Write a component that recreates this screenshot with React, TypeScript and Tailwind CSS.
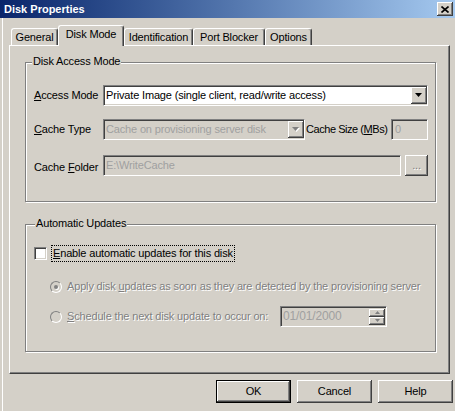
import React from "react";

const raised =
  "bg-[#d4d0c8] shadow-[inset_-1px_-1px_0_#404040,inset_1px_1px_0_#ffffff,inset_-2px_-2px_0_#808080]";
const sunken =
  "border border-t-[#808080] border-l-[#808080] border-b-white border-r-white shadow-[inset_1px_1px_0_#404040,inset_-1px_-1px_0_#d4d0c8]";
const etched = "border border-[#808080] shadow-[inset_1px_1px_0_#ffffff,1px_1px_0_#ffffff]";
const dim = "text-[#808080] [text-shadow:1px_1px_0_#ffffff]";

const Arrow = ({ off = false }: { off?: boolean }) => (
  <svg width="8" height="5" viewBox="0 0 8 5">
    {off && <path d="M1 1h7L4.5 5z" fill="#ffffff" />}
    <path d="M0 0h7L3.5 4z" fill={off ? "#808080" : "#000000"} />
  </svg>
);

const Tab = ({ label, w, active = false }: { label: string; w: string; active?: boolean }) => (
  <div
    className={`${w} flex items-center justify-center border-l border-t border-r border-white border-r-[#404040] rounded-t-[3px] shadow-[inset_-1px_0_0_#808080] bg-[#d4d0c8] ${
      active ? "h-[21px] relative z-10 pb-[3px]" : "h-[18px]"
    }`}
  >
    {label}
  </div>
);

const Radio = ({ checked = false }: { checked?: boolean }) => (
  <div className="w-[12px] h-[12px] rounded-full border border-t-[#808080] border-l-[#808080] border-b-white border-r-white bg-[#d4d0c8] flex items-center justify-center shrink-0">
    {checked && <div className="w-[4px] h-[4px] rounded-full bg-[#808080] shadow-[1px_1px_0_#ffffff]" />}
  </div>
);

export default function App() {
  return (
    <div className="w-[455px] h-[411px] bg-[#d4d0c8] overflow-hidden font-['Liberation_Sans',Arial,sans-serif] text-[11px] leading-[13px] tracking-[-0.16px] text-black">
      {/* title bar */}
      <div className="h-[18px] flex items-center bg-linear-to-r from-[#0a246a] to-[#a6caf0] pl-[4px]">
        <span className="text-white font-bold text-[11px] tracking-normal">Disk Properties</span>
        <div className={`${raised} ml-auto mr-[2px] w-[16px] h-[14px] flex items-center justify-center`}>
          <svg width="8" height="7" viewBox="0 0 8 7">
            <path d="M0.5 0.5L7.5 6.5M7.5 0.5L0.5 6.5" stroke="#000" strokeWidth="1.6" />
          </svg>
        </div>
      </div>

      <div className="pl-[2px]">
        <div className="border-l border-white pl-[6px] h-[393px] flex flex-col">
          {/* tabs */}
          <div className="mt-[8px] ml-[2px] h-[20px] flex items-end">
            <Tab label="General" w="w-[47px]" />
            <Tab label="Disk Mode" w="w-[66px]" active />
            <Tab label="Identification" w="w-[69px]" />
            <Tab label="Port Blocker" w="w-[72px]" />
            <Tab label="Options" w="w-[47px]" />
          </div>

          {/* panel */}
          <div className="-mt-px w-[441px] h-[329px] border border-white border-r-[#404040] border-b-[#404040] shadow-[inset_-1px_-1px_0_#808080] flex flex-col">
            {/* Disk Access Mode */}
            <div className={`${etched} relative ml-[15px] mt-[16px] w-[411px] h-[140px] flex flex-col`}>
              <span className="absolute -top-[8px] left-[6px] px-[1px] bg-[#d4d0c8]">Disk Access Mode</span>

              <div className="mt-[22px] flex items-center h-[21px]">
                <div className="w-[77px] pl-[8px]">
                  <u>A</u>ccess Mode
                </div>
                <div className={`${sunken} w-[325px] h-[21px] bg-white flex items-center`}>
                  <span className="pl-[2px] flex-1">Private Image (single client, read/write access)</span>
                  <div className={`${raised} w-[16px] h-[17px] flex items-center justify-center`}>
                    <Arrow />
                  </div>
                </div>
              </div>

              <div className="mt-[13px] flex items-center h-[21px]">
                <div className="w-[77px] pl-[8px]">
                  <u>C</u>ache Type
                </div>
                <div className={`${sunken} w-[202px] h-[21px] bg-[#d4d0c8] flex items-center`}>
                  <span className="pl-[2px] flex-1 text-[#a0a0a0]">Cache on provisioning server disk</span>
                  <div className={`${raised} w-[16px] h-[17px] flex items-center justify-center`}>
                    <Arrow off />
                  </div>
                </div>
                <div className="w-[86px] pl-[1px] whitespace-nowrap overflow-hidden tracking-[-0.45px]">
                  Cache Size (<u>M</u>Bs)
                </div>
                <div className={`${sunken} w-[37px] h-[21px] bg-[#d4d0c8] flex items-center pl-[3px] text-[#a0a0a0]`}>0</div>
              </div>

              <div className="mt-[15px] flex items-center h-[21px]">
                <div className="w-[77px] pl-[8px] pt-[4px]">
                  Cache <u>F</u>older
                </div>
                <div className={`${sunken} w-[298px] h-[21px] bg-[#d4d0c8] flex items-center pl-[2px] text-[#a0a0a0]`}>
                  E:\WriteCache
                </div>
                <div className={`${raised} ml-[4px] w-[23px] h-[21px] flex items-center justify-center ${dim}`}>...</div>
              </div>
            </div>

            {/* Automatic Updates */}
            <div className={`${etched} relative ml-[15px] mt-[22px] w-[411px] h-[128px] flex flex-col`}>
              <span className="absolute -top-[8px] left-[9px] px-[1px] bg-[#d4d0c8]">Automatic Updates</span>

              <div className="mt-[20px] h-[17px] flex items-center">
                <div className={`${sunken} ml-[8px] w-[13px] h-[13px] bg-white shrink-0`} />
                <span className="ml-[4px] px-[1px] py-[1px] border border-dotted border-black">
                  <u>E</u>nable automatic updates for this disk
                </span>
              </div>

              <div className="mt-[16px] h-[17px] flex items-center">
                <div className="ml-[24px]">
                  <Radio checked />
                </div>
                <span className={`ml-[5px] whitespace-nowrap ${dim}`}>
                  Apply disk <u>u</u>pdates as soon as they are detected by the provisioning server
                </span>
              </div>

              <div className="mt-[11px] h-[21px] flex items-center">
                <div className="ml-[24px]">
                  <Radio />
                </div>
                <span className={`ml-[5px] w-[213px] whitespace-nowrap ${dim}`}>
                  <u>S</u>chedule the next disk update to occur on:
                </span>
                <div className={`${sunken} w-[107px] h-[21px] bg-[#d4d0c8] flex items-center`}>
                  <span className="pl-[2px] flex-1 text-[#a0a0a0] text-[12px]">01/01/2000</span>
                  <div className="flex flex-col mr-[1px]">
                    <div className={`${raised} w-[16px] h-[8px] flex items-center justify-center`}>
                      <svg width="5" height="3" viewBox="0 0 5 3">
                        <path d="M0 3h5L2.5 0z" fill="#808080" />
                      </svg>
                    </div>
                    <div className={`${raised} w-[16px] h-[8px] flex items-center justify-center`}>
                      <svg width="5" height="3" viewBox="0 0 5 3">
                        <path d="M0 0h5L2.5 3z" fill="#808080" />
                      </svg>
                    </div>
                  </div>
                </div>
              </div>
            </div>
          </div>

          {/* buttons */}
          <div className="mt-[6px] flex justify-end gap-[6px] pr-[2px]">
            <div className="w-[75px] h-[23px] border border-black">
              <div className={`${raised} w-full h-full flex items-center justify-center`}>OK</div>
            </div>
            <div className={`${raised} w-[75px] h-[23px] flex items-center justify-center`}>Cancel</div>
            <div className={`${raised} w-[75px] h-[23px] flex items-center justify-center`}>Help</div>
          </div>
        </div>
      </div>
    </div>
  );
}
